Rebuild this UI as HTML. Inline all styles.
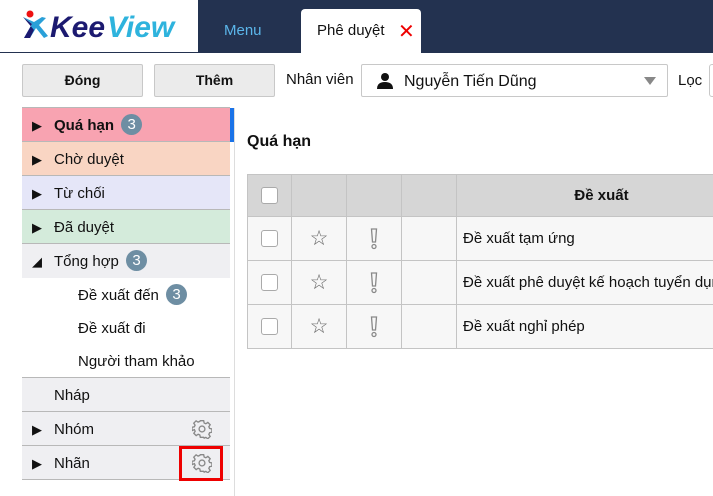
<!DOCTYPE html>
<html><head><meta charset="utf-8"><style>
*{box-sizing:border-box;margin:0;padding:0}
body{width:713px;height:496px;overflow:hidden;background:#fff;font-family:"Liberation Sans",Arial,sans-serif;font-size:15px;color:#111;position:relative}
.abs{position:absolute}
.btn{position:absolute;top:64px;height:33px;background:#ebebeb;border:1px solid #c8c8c8;border-radius:2px;font-weight:bold;font-size:14px;text-align:center;line-height:31px}
.row{position:absolute;left:22px;width:208px;height:34px;border-bottom:1px solid #b8b8b8;line-height:35px;padding-left:32px}
.row .tri{position:absolute;left:10px;top:0;font-size:13px}
.badge{display:inline-block;width:21px;height:21px;border-radius:50%;background:#6e8ea3;color:#fff;text-align:center;line-height:21px;font-size:15px;vertical-align:1px;margin-left:3px;font-weight:normal}
.sub{position:absolute;left:78px;height:33px;line-height:35px}
table{position:absolute;left:247px;top:174px;border-collapse:collapse;width:500px}
td{border:1px solid #c4c4c4;height:44px;background:#f7f7f7;text-align:center}
tr.h td{background:#d6d6d6;height:42px;font-weight:bold}
.cb{display:inline-block;width:17px;height:17px;border:1px solid #aaa;border-radius:3px;background:#fff;vertical-align:middle}
.t{text-align:left;padding-left:6px}
</style></head><body>
<div class="abs" style="left:0;top:52px;width:198px;height:1px;background:#233250"></div>
<div class="abs" style="left:198px;top:0;width:515px;height:53px;background:#233250"></div>
<svg class="abs" style="left:20px;top:8px" width="160" height="34" viewBox="0 0 160 34">
<circle cx="10" cy="6" r="3.5" fill="#e11"/>
<path d="M3 9 L12 16 L4 30 L10 30 L16 20 L24 30 L28 28 L19 17 L26 10 L22 9 L14 14 Z" fill="#2aa0d8"/>
<path d="M3 9 L12 16 L4 30 L10 30 L14 22 Z" fill="#1c1a70"/>
<text x="30" y="29" font-family="Liberation Sans" font-weight="bold" font-style="italic" font-size="30" fill="#1c1a70">Kee</text>
<text x="87" y="29" font-family="Liberation Sans" font-weight="bold" font-style="italic" font-size="30" fill="#2eb3dd">View</text>
</svg>
<div class="abs" style="left:224px;top:22px;color:#5bb6ea;font-size:15px">Menu</div>
<div class="abs" style="left:301px;top:9px;width:120px;height:44px;background:#fff;border-radius:4px 4px 0 0"></div>
<div class="abs" style="left:317px;top:22px;font-size:15px">Phê duyệt</div>
<div class="abs" style="left:398px;top:19px;color:#e00;font-size:20px">✕</div>
<div class="btn" style="left:22px;width:121px">Đóng</div>
<div class="btn" style="left:154px;width:121px">Thêm</div>
<div class="abs" style="left:286px;top:71px">Nhân viên</div>
<div class="abs" style="left:361px;top:64px;width:307px;height:33px;border:1px solid #c8c8c8;border-radius:2px"></div>
<svg class="abs" style="left:376px;top:72px" width="18" height="18" viewBox="0 0 18 18"><circle cx="9" cy="5" r="4" fill="#111"/><path d="M1 17 Q1 10 9 10 Q17 10 17 17 Z" fill="#111"/></svg>
<div class="abs" style="left:404px;top:73px;font-size:16px">Nguyễn Tiến Dũng</div>
<div class="abs" style="left:644px;top:77px;width:0;height:0;border-left:6px solid transparent;border-right:6px solid transparent;border-top:8px solid #888"></div>
<div class="abs" style="left:678px;top:72px">Lọc</div>
<div class="abs" style="left:709px;top:64px;width:10px;height:33px;border:1px solid #c8c8c8;border-radius:3px"></div>
<div class="abs" style="left:22px;top:107px;width:208px;height:1px;background:#b8b8b8"></div>
<div class="abs" style="left:234px;top:108px;width:1px;height:388px;background:#ddd"></div>
<div class="abs" style="left:230px;top:108px;width:4px;height:34px;background:#1a73e8"></div>
<div class="row" style="top:108px;background:#f8a3b1;font-weight:bold"><span class="tri" style="font-weight:normal">▶</span>Quá hạn <span class="badge">3</span></div>
<div class="row" style="top:142px;background:#f9d5c3"><span class="tri">▶</span>Chờ duyệt</div>
<div class="row" style="top:176px;background:#e5e6f8"><span class="tri">▶</span>Từ chối</div>
<div class="row" style="top:210px;background:#d4ebdb"><span class="tri">▶</span>Đã duyệt</div>
<div class="row" style="top:244px;background:#efeff2;border-bottom:none"><span class="tri">◢</span>Tổng hợp <span class="badge">3</span></div>
<div class="sub" style="top:278px">Đề xuất đến <span class="badge">3</span></div>
<div class="sub" style="top:311px">Đề xuất đi</div>
<div class="sub" style="top:344px">Người tham khảo</div>
<div class="abs" style="left:22px;top:377px;width:208px;height:1px;background:#b8b8b8"></div>
<div class="row" style="top:378px;background:#efeff2">Nháp</div>
<div class="row" style="top:412px;background:#efeff2"><span class="tri">▶</span>Nhóm</div>
<div class="row" style="top:446px;background:#efeff2"><span class="tri">▶</span>Nhãn</div>
<svg class="abs" style="left:192px;top:419px" width="20" height="20" viewBox="0 0 24 24"><path fill="none" stroke="#888" stroke-width="1.6" d="M10 2h4l.6 2.8 2 .9 2.4-1.6 2.8 2.8-1.6 2.4.9 2 2.8.6v4l-2.8.6-.9 2 1.6 2.4-2.8 2.8-2.4-1.6-2 .9L14 22h-4l-.6-2.8-2-.9-2.4 1.6-2.8-2.8 1.6-2.4-.9-2L0 14v-4l2.8-.6.9-2L2.1 5l2.8-2.8 2.4 1.6 2-.9z"/><circle cx="12" cy="12" r="3.5" fill="none" stroke="#888" stroke-width="1.6"/></svg>
<svg class="abs" style="left:192px;top:453px" width="20" height="20" viewBox="0 0 24 24"><path fill="none" stroke="#888" stroke-width="1.6" d="M10 2h4l.6 2.8 2 .9 2.4-1.6 2.8 2.8-1.6 2.4.9 2 2.8.6v4l-2.8.6-.9 2 1.6 2.4-2.8 2.8-2.4-1.6-2 .9L14 22h-4l-.6-2.8-2-.9-2.4 1.6-2.8-2.8 1.6-2.4-.9-2L0 14v-4l2.8-.6.9-2L2.1 5l2.8-2.8 2.4 1.6 2-.9z"/><circle cx="12" cy="12" r="3.5" fill="none" stroke="#888" stroke-width="1.6"/></svg>
<div class="abs" style="left:179px;top:446px;width:44px;height:35px;border:3px solid #e00"></div>
<div class="abs" style="left:247px;top:133px;font-weight:bold;font-size:16px">Quá hạn</div>
<table>
<tr class="h"><td style="width:44px"><span class="cb"></span></td><td style="width:55px"></td><td style="width:55px"></td><td style="width:55px"></td><td>Đề xuất</td></tr>
<tr><td><span class="cb"></span></td><td style="color:#666;font-size:21px">☆</td><td><svg width="8" height="22" viewBox="0 0 8 22" style="vertical-align:middle"><path d="M1.5 1h5l-1 13h-3z" fill="none" stroke="#888" stroke-width="1.3"/><circle cx="4" cy="18.5" r="2" fill="none" stroke="#888" stroke-width="1.3"/></svg></td><td></td><td class="t">Đề xuất tạm ứng</td></tr>
<tr><td><span class="cb"></span></td><td style="color:#666;font-size:21px">☆</td><td><svg width="8" height="22" viewBox="0 0 8 22" style="vertical-align:middle"><path d="M1.5 1h5l-1 13h-3z" fill="none" stroke="#888" stroke-width="1.3"/><circle cx="4" cy="18.5" r="2" fill="none" stroke="#888" stroke-width="1.3"/></svg></td><td></td><td class="t" style="white-space:nowrap">Đề xuất phê duyệt kế hoạch tuyển dụng</td></tr>
<tr><td><span class="cb"></span></td><td style="color:#666;font-size:21px">☆</td><td><svg width="8" height="22" viewBox="0 0 8 22" style="vertical-align:middle"><path d="M1.5 1h5l-1 13h-3z" fill="none" stroke="#888" stroke-width="1.3"/><circle cx="4" cy="18.5" r="2" fill="none" stroke="#888" stroke-width="1.3"/></svg></td><td></td><td class="t">Đề xuất nghỉ phép</td></tr>
</table>
</body></html>
